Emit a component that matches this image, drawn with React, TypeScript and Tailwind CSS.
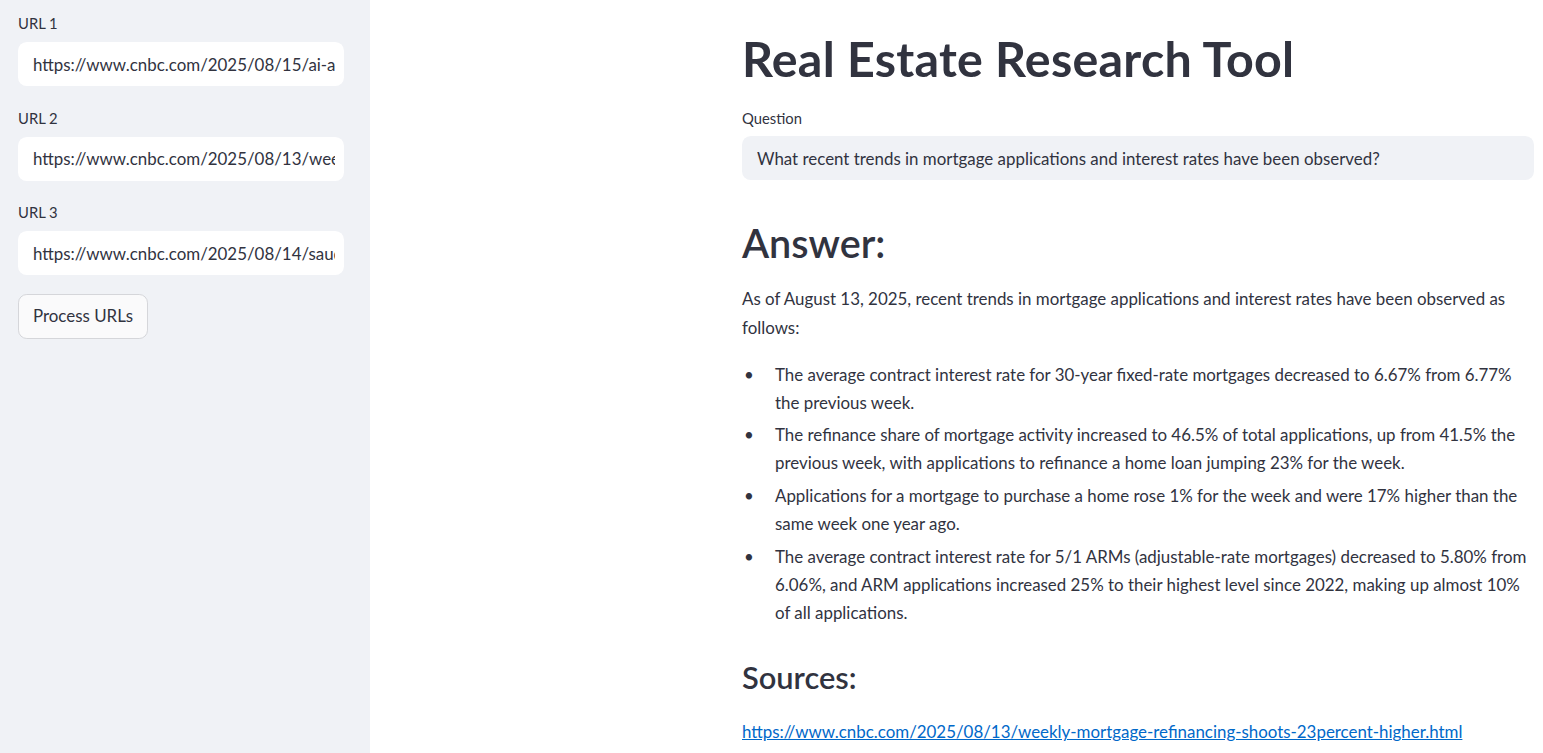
import React from 'react';

const urls = [
  'https://www.cnbc.com/2025/08/15/ai-apartment-hunting-rental-search.html',
  'https://www.cnbc.com/2025/08/13/weekly-mortgage-refinancing-shoots-23percent-higher.html',
  'https://www.cnbc.com/2025/08/14/saudi-arabia-real-estate-foreign-buyers.html',
];

const bullets = [
  'The average contract interest rate for 30-year fixed-rate mortgages decreased to 6.67% from 6.77% the previous week.',
  'The refinance share of mortgage activity increased to 46.5% of total applications, up from 41.5% the previous week, with applications to refinance a home loan jumping 23% for the week.',
  'Applications for a mortgage to purchase a home rose 1% for the week and were 17% higher than the same week one year ago.',
  'The average contract interest rate for 5/1 ARMs (adjustable-rate mortgages) decreased to 5.80% from 6.06%, and ARM applications increased 25% to their highest level since 2022, making up almost 10% of all applications.',
];

function UrlInput({ label, value }: { label: string; value: string }) {
  return (
    <div className="flex flex-col">
      <label className="text-[14.8px] leading-[22px] mb-[8px]">{label}</label>
      <input
        readOnly
        value={value}
        className="h-[44px] w-full rounded-[8.8px] bg-white pl-[15px] pr-[9px] text-[16.9px] text-[#31333f] outline-none"
      />
    </div>
  );
}

export default function App() {
  return (
    <div
      className="flex w-full h-[753px] overflow-hidden bg-white text-[#31333f]"
      style={{ fontFamily: 'Lato, "Noto Sans", sans-serif' }}
    >
      <aside className="w-[370px] shrink-0 bg-[#f0f2f6] pl-[18px] pr-[26px] pt-[12px] flex flex-col gap-[20.5px]">
        {urls.map((u, i) => (
          <UrlInput key={i} label={`URL ${i + 1}`} value={u} />
        ))}
        <div className="-mt-[2px]">
          <button className="h-[45px] px-[14px] rounded-[8.8px] border border-[#d5d6da] bg-[#fafafb] text-[16.9px]">
            Process URLs
          </button>
        </div>
      </aside>

      <main className="flex-1 pl-[372px]">
        <div className="w-[792px] pt-[29px]">
          <h1 className="text-[48.4px] font-bold leading-[58px] tracking-[0.25px]">Real Estate Research Tool</h1>

          <div className="mt-[20px] text-[14.8px] leading-[22px] mb-[7px]">Question</div>
          <input
            readOnly
            value="What recent trends in mortgage applications and interest rates have been observed?"
            className="h-[44px] w-full rounded-[8.8px] bg-[#f0f2f6] px-[15px] text-[16.9px] text-[#31333f] outline-none"
          />

          <h2 className="mt-[39px] text-[39.6px] font-semibold leading-[48px]">Answer:</h2>

          <p className="mt-[18px] text-[16.9px] leading-[28.8px]">
            As of August 13, 2025, recent trends in mortgage applications and interest rates have been observed as follows:
          </p>

          <ul className="mt-[18px] flex flex-col gap-[4.4px] text-[16.9px] leading-[28.16px]">
            {bullets.map((b, i) => (
              <li key={i} className="flex">
                <span className="w-[33px] shrink-0 pl-[2px]">•</span>
                <span>{b}</span>
              </li>
            ))}
          </ul>

          <h3 className="mt-[32px] text-[30.8px] font-semibold leading-[37px]">Sources:</h3>

          <div className="mt-[22px] text-[16.9px] leading-[28px]">
            <a href="#" className="text-[#0068c9] underline">
              https://www.cnbc.com/2025/08/13/weekly-mortgage-refinancing-shoots-23percent-higher.html
            </a>
          </div>
        </div>
      </main>
    </div>
  );
}
